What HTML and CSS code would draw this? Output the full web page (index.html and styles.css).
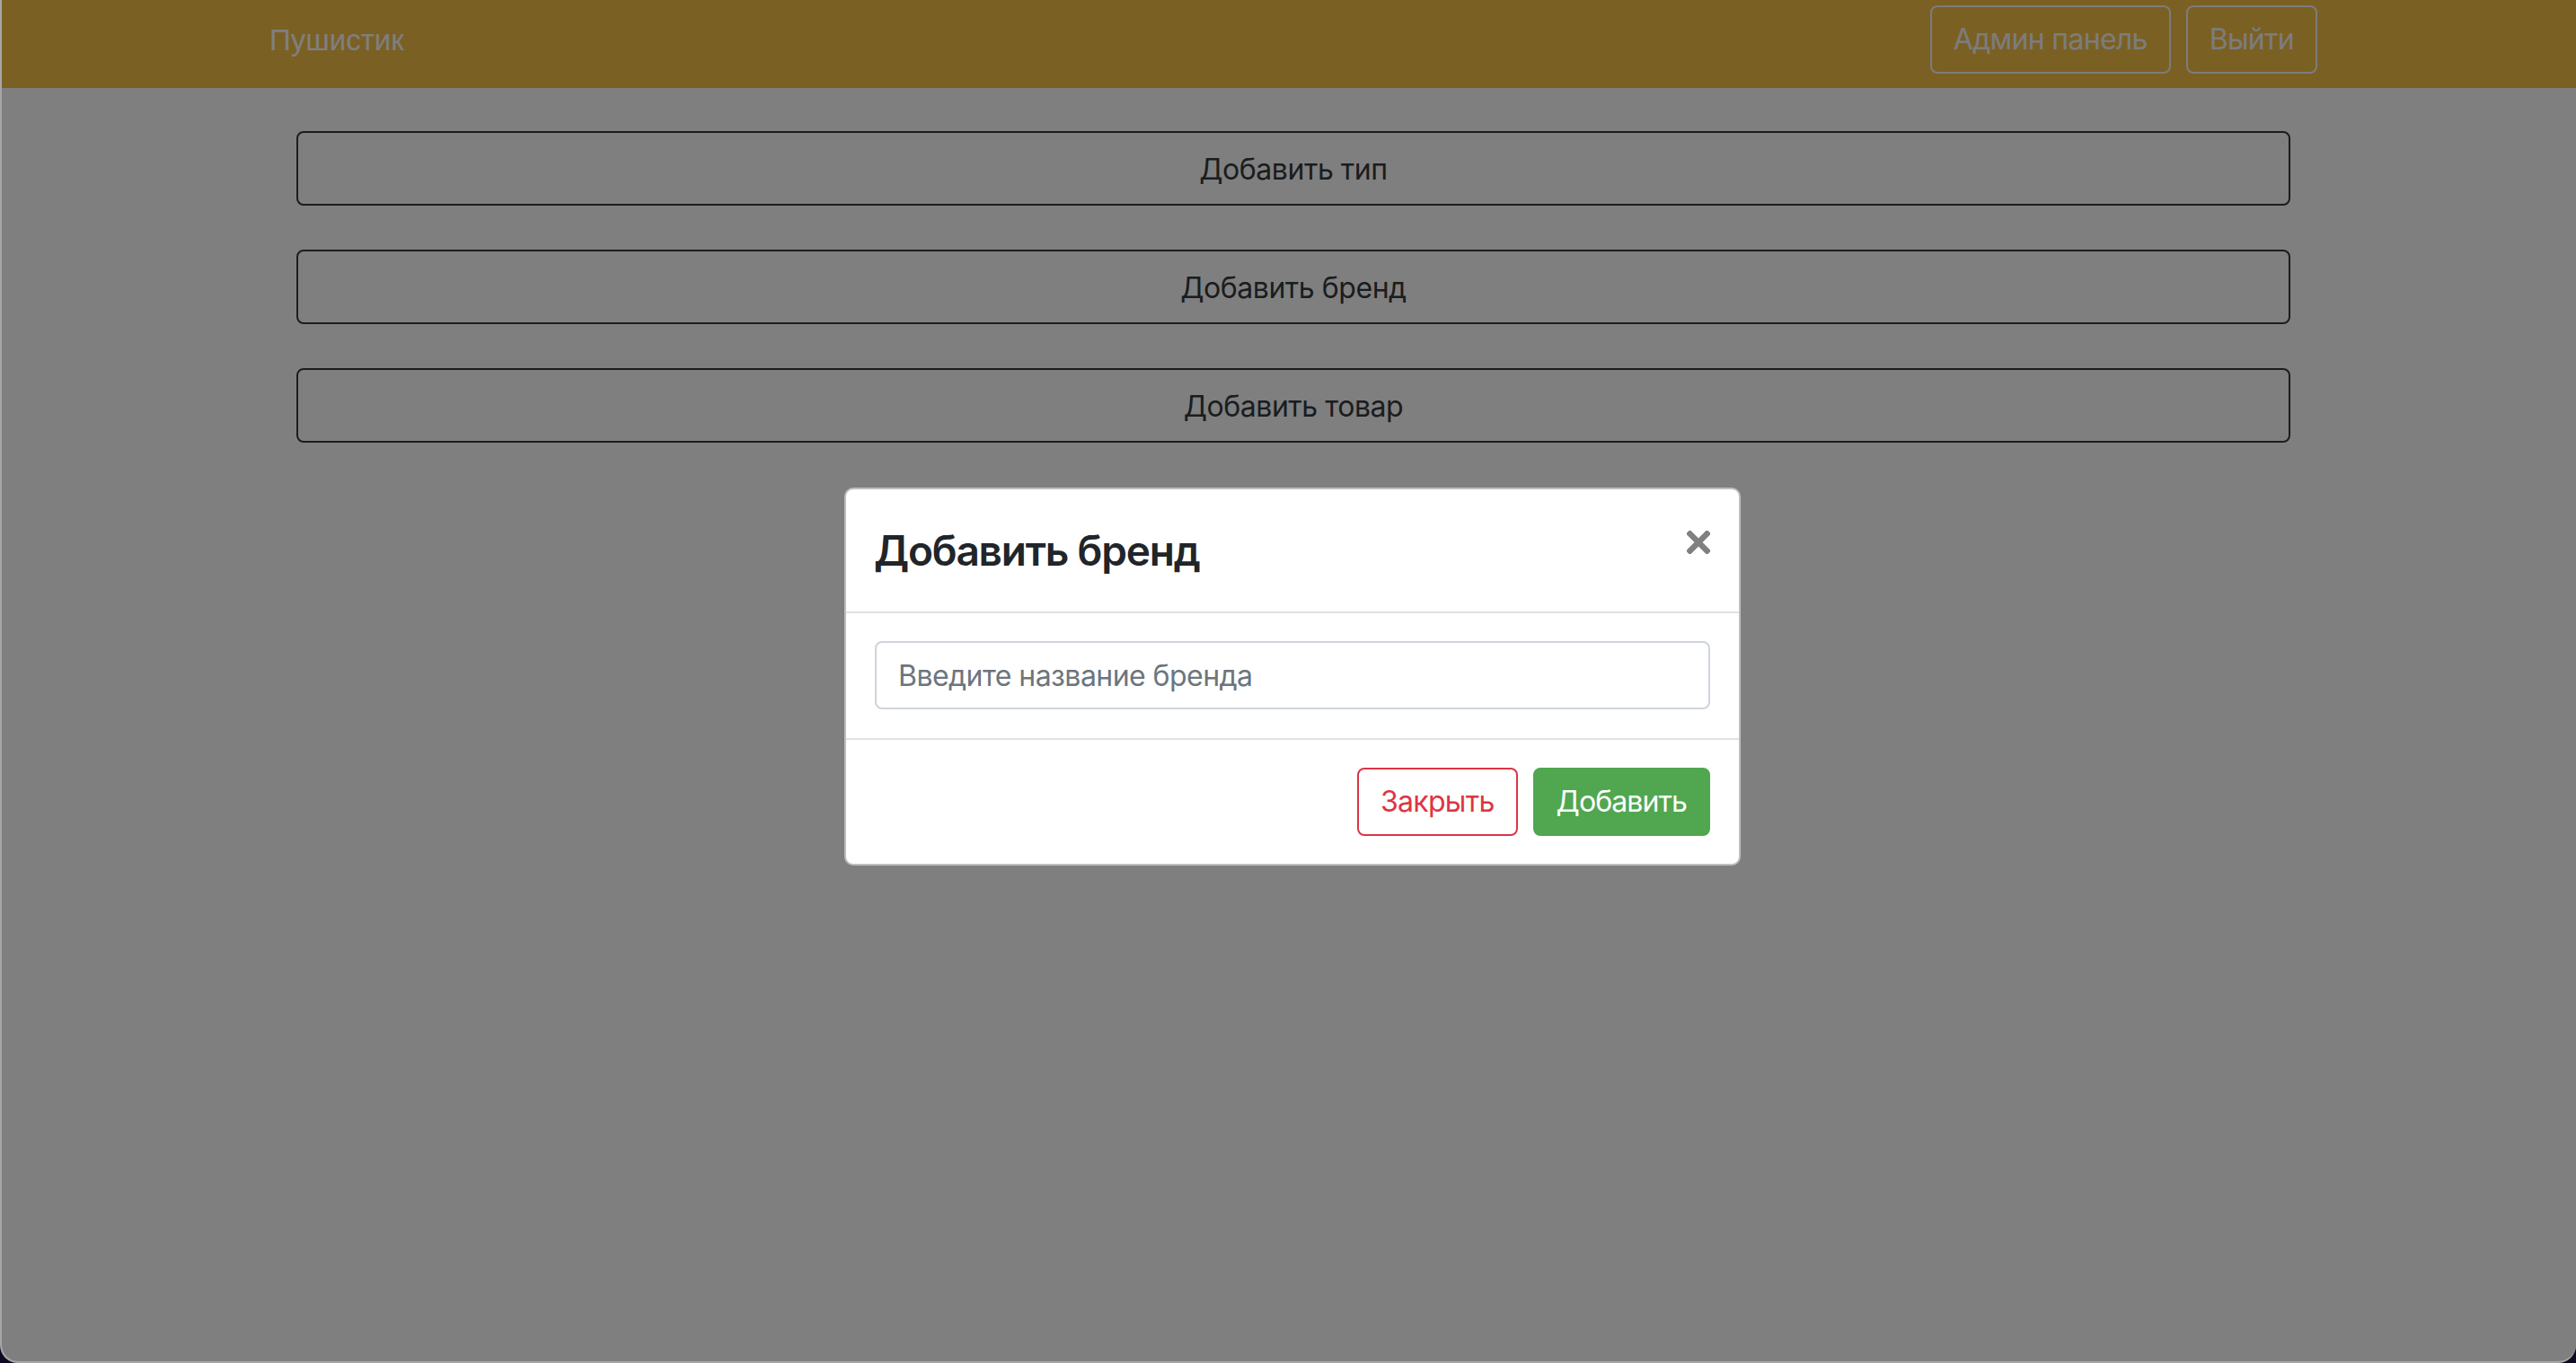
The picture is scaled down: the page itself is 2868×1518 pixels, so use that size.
FILE: index.html
```html
<!DOCTYPE html>
<html lang="ru">
<head>
<meta charset="utf-8">
<title>Пушистик — Админ панель</title>
<link rel="stylesheet" href="styles.css">
</head>
<body>
<div class="window">
  <nav class="navbar">
    <div class="nav-inner">
      <span class="brand">Пушистик</span>
      <div class="nav-actions">
        <button class="btn btn-outline-light">Админ панель</button>
        <button class="btn btn-outline-light">Выйти</button>
      </div>
    </div>
  </nav>
  <main class="content">
    <button class="btn btn-outline-dark btn-block">Добавить тип</button>
    <button class="btn btn-outline-dark btn-block">Добавить бренд</button>
    <button class="btn btn-outline-dark btn-block">Добавить товар</button>
  </main>
  <div class="backdrop"></div>
  <div class="modal-layer">
    <div class="modal">
      <div class="modal-header">
        <h4 class="modal-title">Добавить бренд</h4>
        <span class="close" aria-label="Close">
          <svg width="26" height="26" viewBox="0 0 26 26"><path d="M3.5 3.5 L22.5 22.5 M22.5 3.5 L3.5 22.5" stroke="#808080" stroke-width="6.5" stroke-linecap="square" fill="none"/></svg>
        </span>
      </div>
      <div class="modal-body">
        <input class="form-control" type="text" placeholder="Введите название бренда">
      </div>
      <div class="modal-footer">
        <button class="btn btn-outline-danger">Закрыть</button>
        <button class="btn btn-success">Добавить</button>
      </div>
    </div>
  </div>
</div>
</body>
</html>
```

FILE: styles.css
```css
* {
  box-sizing: border-box;
}

html, body {
  margin: 0;
  padding: 0;
  background: #0b0b24;
}

body {
  font-family: Inter, "Noto Sans", sans-serif;
  color: #212529;
}

.window {
  position: relative;
  width: 2868px;
  height: 1518px;
  background: #ffffff;
  border-left: 2px solid #a6a6a6;
  border-bottom: 2px solid #a6a6a6;
  border-radius: 0 0 20px 20px;
  overflow: hidden;
}

.navbar {
  height: 98px;
  padding-top: 6px;
  background: #f6c146;
}

.nav-inner {
  width: 2280px;
  margin-left: 298px;
  height: 76px;
  display: flex;
  align-items: center;
  justify-content: space-between;
}

.brand {
  font-family: "Liberation Sans", Arial, sans-serif;
  font-size: 33px;
  color: #ffffff;
  padding-top: 2px;
}

.nav-actions {
  display: flex;
  gap: 17px;
}

.btn {
  font-family: Inter, "Noto Sans", sans-serif;
  font-size: 32px;
  line-height: 48px;
  letter-spacing: -0.7px;
  padding: 12px 24px;
  border: 2px solid transparent;
  border-radius: 8px;
  background: transparent;
  cursor: pointer;
  white-space: nowrap;
}

.btn-outline-light {
  color: #f8f9fa;
  border-color: #f8f9fa;
}

.btn-outline-dark {
  color: #343a40;
  border-color: #343a40;
}

.btn-outline-danger {
  color: #dc3545;
  border-color: #dc3545;
}

.btn-success {
  color: #ffffff;
  background: #50a750;
  border-color: #50a750;
}

.content {
  width: 2220px;
  margin: 48px 0 0 328px;
  display: flex;
  flex-direction: column;
  gap: 49px;
}

.btn-block {
  width: 100%;
  padding: 17px 24px 14px;
  letter-spacing: -0.45px;
}

.backdrop {
  position: absolute;
  inset: 0;
  background: rgba(0, 0, 0, 0.5);
}

.modal-layer {
  position: absolute;
  inset: 0;
  display: flex;
  justify-content: center;
  align-items: flex-start;
  padding-top: 543px;
  padding-left: 8px;
}

.modal {
  width: 998px;
  background: #ffffff;
  border: 2px solid rgba(0, 0, 0, 0.25);
  border-radius: 10px;
  overflow: hidden;
}

.modal-header {
  display: flex;
  justify-content: space-between;
  align-items: flex-start;
  padding: 32px 32px 32px 31px;
  border-bottom: 2px solid #dee2e6;
}

.modal-title {
  margin: 0;
  font-size: 46px;
  line-height: 72px;
  font-weight: 600;
  letter-spacing: -1.2px;
  color: #212529;
}

.close {
  display: block;
  width: 26px;
  height: 26px;
  margin-top: 14px;
}

.close svg {
  display: block;
}

.modal-body {
  padding: 31px 32px 32px;
}

.form-control {
  display: block;
  width: 100%;
  height: 76px;
  padding: 12px 24px;
  font-family: Inter, "Noto Sans", sans-serif;
  font-size: 32px;
  line-height: 48px;
  letter-spacing: -0.55px;
  color: #495057;
  border: 2px solid #ced4da;
  border-radius: 8px;
  background: #ffffff;
  outline: none;
}

.form-control::placeholder {
  color: #6c757d;
  opacity: 1;
}

.modal-footer {
  display: flex;
  justify-content: flex-end;
  align-items: center;
  padding: 23px 24px 23px;
  border-top: 2px solid #dee2e6;
}

.modal-footer .btn {
  margin: 8px;
}

.modal-footer .btn:last-child {
  margin-left: 9px;
}

.modal-footer .btn-success {
  letter-spacing: -0.9px;
}
```
